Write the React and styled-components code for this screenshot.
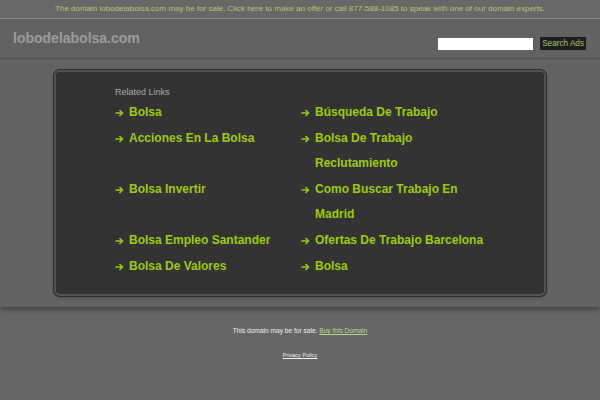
import React from 'react'
import styled, { createGlobalStyle } from 'styled-components'

const GlobalStyle = createGlobalStyle`
  html, body {
    margin: 0;
    padding: 0;
    background: #666666;
    font-family: "Liberation Sans", Arial, sans-serif;
  }
`

const TopBar = styled.div`
  height: 18px;
  line-height: 18px;
  text-align: center;
  font-size: 8px;
  color: #a9c96f;
  background: #686868;
  border-bottom: 1px solid #8c8c8c;
  white-space: nowrap;
`

const Header = styled.div`
  display: flex;
  justify-content: space-between;
  align-items: center;
  height: 39px;
  padding: 0 14px 0 13px;
  background: #626262;
  border-bottom: 1px solid #525252;
`

const Title = styled.div`
  font-size: 14px;
  font-weight: bold;
  color: #9c9c9c;
  margin-top: -1px;
`

const SearchForm = styled.form`
  display: flex;
  align-items: center;
  gap: 7px;
  margin: 10px 0 0;
`

const SearchInput = styled.input.attrs({ type: 'text' })`
  width: 95px;
  height: 12px;
  padding: 0;
  border: none;
  background: #ffffff;
  box-sizing: border-box;
  outline: none;
`

const SearchButton = styled.button`
  height: 13px;
  padding: 0 2px;
  border: none;
  background: #1e1e1e;
  color: #a3c86a;
  font-family: "Liberation Sans", Arial, sans-serif;
  font-size: 8.2px;
  line-height: 13px;
  cursor: pointer;
`

const Main = styled.div`
  position: relative;
  z-index: 1;
  padding: 11px 54px 11px;
  background: #626262;
  box-shadow: 0 3px 5px rgba(0, 0, 0, 0.35);
`

const Box = styled.div`
  box-sizing: border-box;
  height: 226px;
  padding: 15px 0 0 59px;
  background: #333333;
  border: 2px solid #525252;
  border-radius: 6px;
  box-shadow: 0 0 0 1px #2c2c2c, 0 1px 3px rgba(0, 0, 0, 0.4);
`

const Heading = styled.div`
  font-size: 9px;
  line-height: 11px;
  color: #a8a8a8;
  margin-bottom: 2px;
`

const LinkGrid = styled.div`
  display: grid;
  grid-template-columns: 186px 186px;
`

const LinkItem = styled.a`
  display: flex;
  font-size: 12px;
  font-weight: bold;
  line-height: 25.6px;
  color: #9dcc0e;
  text-decoration: none;
`

const Arrow = styled.span`
  flex: 0 0 14px;
  display: flex;
  align-items: flex-start;
  padding-top: 9px;
`

const Footer = styled.div`
  padding: 20px 0 0;
  text-align: center;
  color: #f0f0f0;
`

const SaleLine = styled.div`
  font-size: 6.6px;
  line-height: 8px;
`

const BuyLink = styled.a`
  color: #b9d98a;
  text-decoration: underline;
`

const Privacy = styled.a`
  display: inline-block;
  margin-top: 16px;
  font-size: 5.6px;
  line-height: 8px;
  color: #f0f0f0;
  text-decoration: underline;
`

const ArrowIcon = () => (
  <svg width="9" height="8" viewBox="0 0 9 8" fill="none" stroke="currentColor" strokeWidth="1.5">
    <path d="M0.5 4H7.5M4.5 1L7.5 4L4.5 7" />
  </svg>
)

const rows = [
  ['Bolsa', 'Búsqueda De Trabajo'],
  ['Acciones En La Bolsa', 'Bolsa De Trabajo Reclutamiento'],
  ['Bolsa Invertir', 'Como Buscar Trabajo En Madrid'],
  ['Bolsa Empleo Santander', 'Ofertas De Trabajo Barcelona'],
  ['Bolsa De Valores', 'Bolsa'],
]

export default function App() {
  return (
    <>
      <GlobalStyle />
      <TopBar>
        The domain lobodelabolsa.com may be for sale. Click here to make an offer or call 877-588-1085 to speak with one of our domain experts.
      </TopBar>
      <Header>
        <Title>lobodelabolsa.com</Title>
        <SearchForm onSubmit={(e) => e.preventDefault()}>
          <SearchInput />
          <SearchButton>Search Ads</SearchButton>
        </SearchForm>
      </Header>
      <Main>
        <Box>
          <Heading>Related Links</Heading>
          <LinkGrid>
            {rows.flat().map((label, i) => (
              <LinkItem key={i} href="#">
                <Arrow><ArrowIcon /></Arrow>
                <span>{label}</span>
              </LinkItem>
            ))}
          </LinkGrid>
        </Box>
      </Main>
      <Footer>
        <SaleLine>
          This domain may be for sale. <BuyLink href="#">Buy this Domain</BuyLink>
        </SaleLine>
        <Privacy href="#">Privacy Policy</Privacy>
      </Footer>
    </>
  )
}
